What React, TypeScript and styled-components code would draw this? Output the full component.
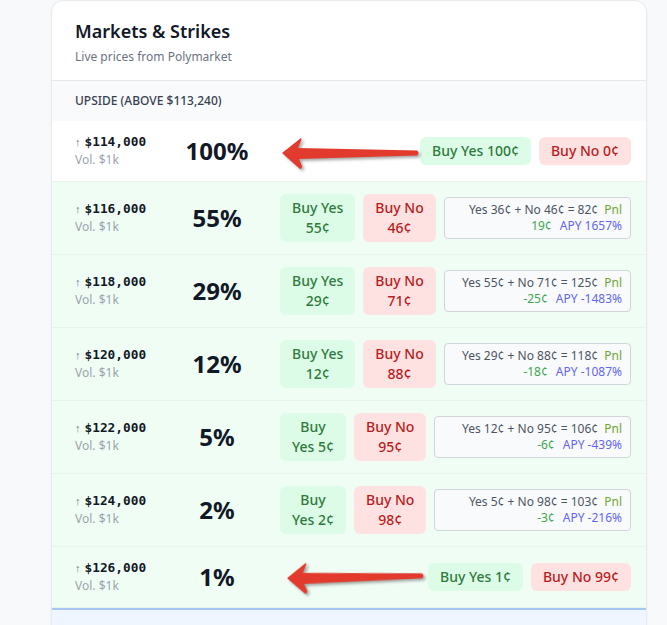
import React from "react";
import styled, { createGlobalStyle } from "styled-components";

const GlobalStyle = createGlobalStyle`
  html, body { margin: 0; padding: 0; background: #f8f9fb; }
  body { font-family: "Noto Sans", "Open Sans", sans-serif; color: #111827; }
  * { box-sizing: border-box; }
`;

const Page = styled.div`
  padding-left: 51px;
  width: 647px;
`;

const Card = styled.div`
  width: 596px;
  background: #ffffff;
  border: 1px solid #e8eaee;
  border-radius: 12px;
  box-shadow: 0 1px 3px rgba(0, 0, 0, 0.05);
  overflow: hidden;
`;

const Header = styled.div`
  padding: 16px 23px 15px;
  border-bottom: 1px solid #e5e7eb;
`;

const Title = styled.h2`
  margin: 0;
  font-size: 18px;
  line-height: 28px;
  font-weight: 600;
  color: #111827;
`;

const Subtitle = styled.p`
  margin: 4px 0 0;
  font-size: 12px;
  line-height: 16px;
  color: #6b7280;
`;

const SectionHeader = styled.div`
  background: #f9fafb;
  padding: 12px 23px;
  font-size: 12px;
  line-height: 16px;
  font-weight: 500;
  color: #374151;
  text-transform: uppercase;
`;

const Row = styled.div<{ $highlight: boolean }>`
  position: relative;
  display: grid;
  grid-template-columns: 79px 94px 1fr;
  column-gap: 16px;
  align-items: center;
  padding: 12px 15px 12px 23px;
  background: ${(p) => (p.$highlight ? "#f0fdf4" : "#ffffff")};
  border-bottom: 1px solid #eaf2ec;
`;

const StrikeCell = styled.div`
  display: flex;
  flex-direction: column;
  white-space: nowrap;
`;

const StrikeLine = styled.div`
  display: flex;
  align-items: baseline;
  font-family: "DejaVu Sans Mono", "Liberation Mono", monospace;
  font-weight: 700;
  font-size: 12.8px;
  line-height: 18px;
  color: #111827;
`;

const UpGlyph = styled.span`
  font-family: "Noto Sans", sans-serif;
  font-weight: 400;
  font-size: 11px;
  color: #6b7280;
  margin-right: 4px;
`;

const Vol = styled.div`
  font-size: 12px;
  line-height: 18px;
  color: #9ca3af;
`;

const Pct = styled.div`
  text-align: center;
  font-size: 24px;
  line-height: 32px;
  font-weight: 700;
  color: #111827;
`;

const Actions = styled.div`
  display: flex;
  align-items: center;
  justify-content: flex-end;
  gap: 8px;
`;

const BuyButton = styled.button<{ $side: "yes" | "no" }>`
  flex: none;
  border: none;
  border-radius: 6px;
  padding: 4px 12px;
  font-family: inherit;
  font-size: 14px;
  line-height: 20px;
  font-weight: 500;
  text-align: center;
  white-space: nowrap;
  background: ${(p) => (p.$side === "yes" ? "#dcfce7" : "#fee2e2")};
  color: ${(p) => (p.$side === "yes" ? "#2f7a3c" : "#b91c1c")};
`;

const BtnLine = styled.span`
  display: block;
`;

const InfoBox = styled.div`
  flex: 1;
  min-width: 0;
  border: 1px solid #d1d5db;
  border-radius: 4px;
  background: #f9fafb;
  padding: 4px 8px;
  font-size: 12px;
  line-height: 16px;
  color: #4b5563;
  text-align: right;
  white-space: nowrap;
`;

const InfoLine = styled.div``;

const PnlLabel = styled.span`
  margin-left: 6px;
  color: #72a532;
`;

const PnlValue = styled.span`
  color: #3ea650;
`;

const Apy = styled.span`
  margin-left: 8px;
  color: #6366f1;
`;

const ArrowSvg = styled.svg`
  position: absolute;
  pointer-events: none;
  overflow: visible;
  filter: drop-shadow(2px 2px 1.5px rgba(0, 0, 0, 0.35));
`;

const BottomSection = styled.div`
  border-top: 2px solid #a7c6f3;
  background: #eff6ff;
  height: 60px;
`;

function Arrow({ left, top, tilt = 0 }: { left: number; top: number; tilt?: number }) {
  return (
    <ArrowSvg
      width="145"
      height="40"
      viewBox="0 0 145 40"
      style={{ left, top, transform: `rotate(${tilt}deg)` }}
    >
      <path
        d="M4 20 L23 5 Q24 6 23 8 L20 15 L139 17.5 Q142 20 139 22.5 L21 26 L24 33 Q24 36 22 36 Z"
        fill="#e23b2e"
      />
    </ArrowSvg>
  );
}

type Market = {
  strike: string;
  pct: string;
  yes: string[];
  no: string[];
  info?: { sum: string; pnl: string; apy: string };
  arrow?: { left: number; top: number; tilt?: number };
  highlight: boolean;
};

const markets: Market[] = [
  {
    strike: "$114,000",
    pct: "100%",
    yes: ["Buy Yes 100¢"],
    no: ["Buy No 0¢"],
    arrow: { left: 226, top: 12 },
    highlight: false,
  },
  {
    strike: "$116,000",
    pct: "55%",
    yes: ["Buy Yes", "55¢"],
    no: ["Buy No", "46¢"],
    info: { sum: "Yes 36¢ + No 46¢ = 82¢", pnl: "19¢", apy: "APY 1657%" },
    highlight: true,
  },
  {
    strike: "$118,000",
    pct: "29%",
    yes: ["Buy Yes", "29¢"],
    no: ["Buy No", "71¢"],
    info: { sum: "Yes 55¢ + No 71¢ = 125¢", pnl: "-25¢", apy: "APY -1483%" },
    highlight: true,
  },
  {
    strike: "$120,000",
    pct: "12%",
    yes: ["Buy Yes", "12¢"],
    no: ["Buy No", "88¢"],
    info: { sum: "Yes 29¢ + No 88¢ = 118¢", pnl: "-18¢", apy: "APY -1087%" },
    highlight: true,
  },
  {
    strike: "$122,000",
    pct: "5%",
    yes: ["Buy", "Yes 5¢"],
    no: ["Buy No", "95¢"],
    info: { sum: "Yes 12¢ + No 95¢ = 106¢", pnl: "-6¢", apy: "APY -439%" },
    highlight: true,
  },
  {
    strike: "$124,000",
    pct: "2%",
    yes: ["Buy", "Yes 2¢"],
    no: ["Buy No", "98¢"],
    info: { sum: "Yes 5¢ + No 98¢ = 103¢", pnl: "-3¢", apy: "APY -216%" },
    highlight: true,
  },
  {
    strike: "$126,000",
    pct: "1%",
    yes: ["Buy Yes 1¢"],
    no: ["Buy No 99¢"],
    arrow: { left: 231, top: 10, tilt: -1 },
    highlight: true,
  },
];

export default function App() {
  return (
    <>
      <GlobalStyle />
      <Page>
        <Card>
          <Header>
            <Title>Markets &amp; Strikes</Title>
            <Subtitle>Live prices from Polymarket</Subtitle>
          </Header>
          <SectionHeader>Upside (above $113,240)</SectionHeader>
          {markets.map((m) => (
            <Row key={m.strike} $highlight={m.highlight}>
              <StrikeCell>
                <StrikeLine>
                  <UpGlyph>↑</UpGlyph>
                  {m.strike}
                </StrikeLine>
                <Vol>Vol. $1k</Vol>
              </StrikeCell>
              <Pct>{m.pct}</Pct>
              <Actions>
                <BuyButton $side="yes">
                  {m.yes.map((l) => (
                    <BtnLine key={l}>{l}</BtnLine>
                  ))}
                </BuyButton>
                <BuyButton $side="no">
                  {m.no.map((l) => (
                    <BtnLine key={l}>{l}</BtnLine>
                  ))}
                </BuyButton>
                {m.info && (
                  <InfoBox>
                    <InfoLine>
                      {m.info.sum}
                      <PnlLabel>Pnl</PnlLabel>
                    </InfoLine>
                    <InfoLine>
                      <PnlValue>{m.info.pnl}</PnlValue>
                      <Apy>{m.info.apy}</Apy>
                    </InfoLine>
                  </InfoBox>
                )}
              </Actions>
              {m.arrow && <Arrow left={m.arrow.left} top={m.arrow.top} tilt={m.arrow.tilt} />}
            </Row>
          ))}
          <BottomSection />
        </Card>
      </Page>
    </>
  );
}
